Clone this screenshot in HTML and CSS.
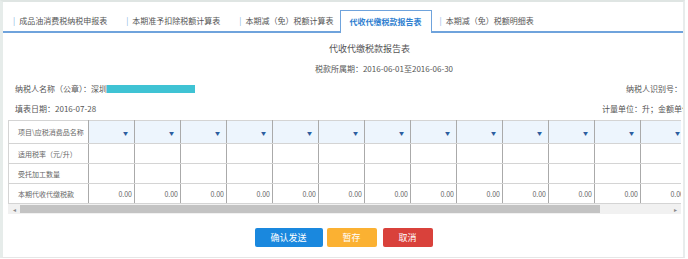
FILE: index.html
```html
<!DOCTYPE html>
<html lang="zh-CN">
<head>
    <meta charset="UTF-8">
    <title>代收代缴税款报告表</title>
    <link rel="stylesheet" href="styles.css">
</head>
<body>
    <div class="page">
        <ul class="tabs">
            <li class="tab"><span class="sep">|</span>成品油消费税纳税申报表</li>
            <li class="tab"><span class="sep">|</span>本期准予扣除税额计算表</li>
            <li class="tab"><span class="sep">|</span>本期减（免）税额计算表</li>
            <li class="tab active">代收代缴税款报告表</li>
            <li class="tab"><span class="sep">|</span>本期减（免）税额明细表</li>
        </ul>

        <div class="report">
            <div class="title">代收代缴税款报告表</div>
            <div class="period">税款所属期：2016-06-01至2016-06-30</div>

            <div class="info-row">
                <span>纳税人名称（公章）：深圳<span class="mask"></span></span>
                <span class="info-right">纳税人识别号：</span>
            </div>
            <div class="info-row">
                <span>填表日期：2016-07-28</span>
                <span class="info-right unit">计量单位：升；金额单位：元</span>
            </div>

            <div class="grid-wrap">
                <table class="grid">
                    <tr class="head">
                        <td class="label">项目\应税消费品名称</td>
                        <td><i>▼</i></td><td><i>▼</i></td><td><i>▼</i></td><td><i>▼</i></td>
                        <td><i>▼</i></td><td><i>▼</i></td><td><i>▼</i></td><td><i>▼</i></td>
                        <td><i>▼</i></td><td><i>▼</i></td><td><i>▼</i></td><td><i>▼</i></td>
                        <td><i>▼</i></td><td><i>▼</i></td>
                    </tr>
                    <tr>
                        <td class="label">适用税率（元/升）</td>
                        <td></td><td></td><td></td><td></td><td></td><td></td><td></td>
                        <td></td><td></td><td></td><td></td><td></td><td></td><td></td>
                    </tr>
                    <tr>
                        <td class="label">受托加工数量</td>
                        <td></td><td></td><td></td><td></td><td></td><td></td><td></td>
                        <td></td><td></td><td></td><td></td><td></td><td></td><td></td>
                    </tr>
                    <tr>
                        <td class="label">本期代收代缴税款</td>
                        <td>0.00</td><td>0.00</td><td>0.00</td><td>0.00</td><td>0.00</td>
                        <td>0.00</td><td>0.00</td><td>0.00</td><td>0.00</td><td>0.00</td>
                        <td>0.00</td><td>0.00</td><td>0.00</td><td>0.00</td>
                    </tr>
                </table>
            </div>
            <div class="scrollbar">
                <span class="arrow">◂</span>
                <span class="thumb"></span>
                <span class="arrow right">▸</span>
            </div>

            <div class="actions">
                <button class="btn send">确认发送</button>
                <button class="btn save">暂存</button>
                <button class="btn cancel">取消</button>
            </div>
        </div>
    </div>
</body>
</html>
```

FILE: styles.css
```css
body {
    margin: 0;
    background-color: #fff;
    font-family: "Noto Sans CJK SC", "Liberation Sans", sans-serif;
    color: #555;
    overflow: hidden;
}

.page {
    width: 680px;
    height: 255px;
    border-top: 2px solid #dfe5e3;
    border-left: 3px solid #e6ecea;
    border-right: 2px solid #e8ecec;
    border-bottom: 1px solid #e6e6e6;
    overflow: hidden;
}

.tabs {
    list-style: none;
    margin: 8px 0 0 0;
    padding: 0 0 0 7px;
    display: flex;
    height: 21px;
    border-bottom: 2px solid #6fa3dc;
}

.tab {
    font-size: 8px;
    line-height: 21px;
    padding: 0 16px 0 3px;
    white-space: nowrap;
    color: #555;
}

.sep {
    color: #7fb0e3;
    margin-right: 4px;
}

.tab.active {
    color: #2f7fd0;
    font-weight: bold;
    background: #fff;
    border: 1px solid #6fa3dc;
    border-bottom: none;
    height: 22px;
    margin-right: 5px;
    padding: 0 9px 0 9px;
    margin-left: -10px;
}

.report {
    padding: 0 0 0 5px;
}

.title {
    text-align: center;
    font-size: 9px;
    margin-top: 10px;
    padding-left: 48px;
    line-height: 12px;
}

.period {
    text-align: center;
    font-size: 8px;
    line-height: 12px;
    margin-top: 8px;
    padding-left: 77px;
}

.info-row {
    display: flex;
    font-size: 8px;
    line-height: 12px;
    margin-top: 8px;
    padding-left: 7px;
    white-space: nowrap;
}

.mask {
    display: inline-block;
    width: 88px;
    height: 8px;
    background-color: #3fc3d4;
    vertical-align: -1px;
}

.info-right {
    margin-left: auto;
    padding-right: 1px;
}

.info-right.unit {
    margin-right: -24px;
}

.grid-wrap {
    margin-top: 5px;
    width: 673px;
    overflow: hidden;
}

.grid {
    border-collapse: collapse;
    table-layout: fixed;
    font-size: 7px;
}

.grid td {
    width: 46px;
    min-width: 46px;
    height: 20px;
    border: 1px solid #d4d4d4;
    border-left-color: #aaa;
    border-right-color: #aaa;
    text-align: right;
    padding: 0 2px 0 0;
    color: #666;
    box-sizing: border-box;
}

.grid td.label {
    width: 80px;
    min-width: 80px;
    text-align: left;
    padding-left: 9px;
    border-left-color: #d4d4d4;
}

.grid .head td {
    background-color: #edf5fd;
    height: 23px;
}

.grid .head td.label {
    background-color: #fff;
}

.grid i {
    font-style: normal;
    font-size: 5px;
    color: #2c5d9f;
    padding-right: 4px;
}

.scrollbar {
    display: flex;
    align-items: center;
    width: 673px;
    height: 10px;
    background-color: #f1f1f1;
}

.arrow {
    font-size: 6px;
    color: #888;
    width: 12px;
    text-align: center;
}

.thumb {
    width: 580px;
    height: 8px;
    background-color: #c3c3c3;
}

.arrow.right {
    margin-left: auto;
}

.actions {
    display: flex;
    justify-content: center;
    gap: 4px;
    margin-top: 14px;
    padding-right: 4px;
}

.btn {
    border: none;
    color: #fff;
    font-family: inherit;
    font-size: 9px;
    height: 19px;
    width: 50px;
    border-radius: 2px;
    padding: 0;
}

.btn.send {
    width: 68px;
    background-color: #1a88de;
}

.btn.save {
    background-color: #fbb132;
}

.btn.cancel {
    margin-left: 2px;
    background-color: #d9413b;
}
```
